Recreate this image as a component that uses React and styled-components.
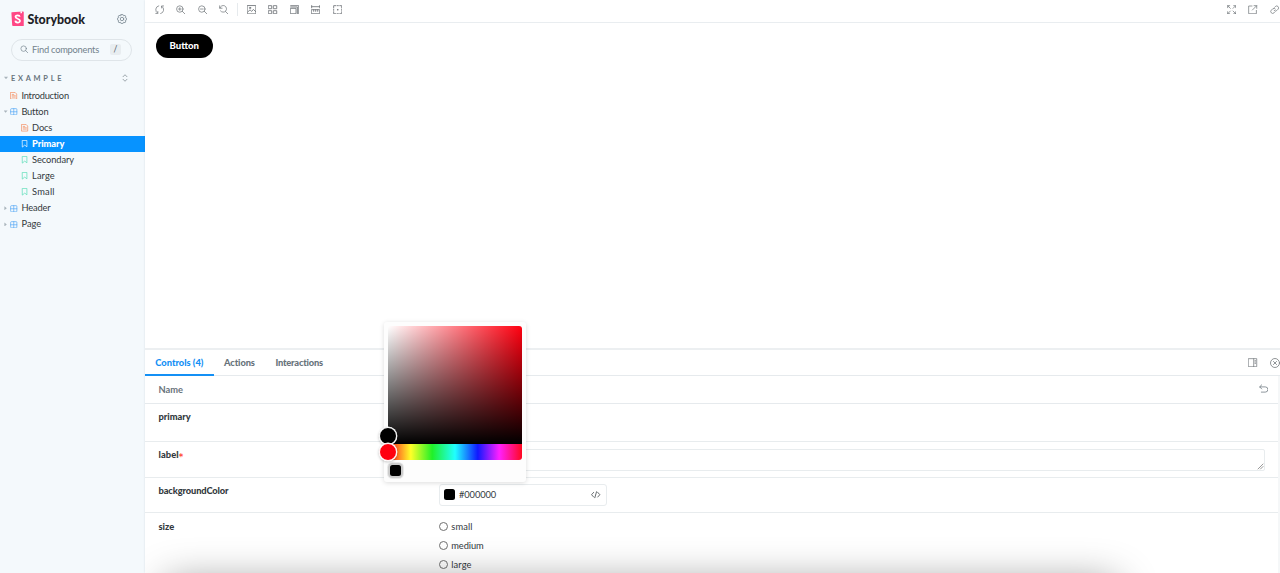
import React from 'react';
import styled, { createGlobalStyle, css } from 'styled-components';

const Global = createGlobalStyle`
  *, *::before, *::after { box-sizing: border-box; }
  html, body { margin: 0; height: 573px; overflow: hidden; background: #fff; }
  body, button, input { font-family: "Lato", "Noto Sans", sans-serif; font-size: 9.3px; color: #33393d; }
`;

const App = styled.div`
  display: flex;
  width: 1280px;
  height: 573px;
  overflow: hidden;
`;

/* icons */

const Svg = styled.svg.attrs({ viewBox: '0 0 14 14' })`
  display: block;
  flex: none;
  width: ${p => p.$size || 9.4}px;
  height: ${p => p.$size || 9.4}px;
  fill: none;
  stroke: currentColor;
  stroke-width: ${p => p.$weight || 1.1};
  stroke-linecap: round;
  stroke-linejoin: round;
`;

const paths = {
  cog: 'M5.8 .6h2.4l.4 1.5 1.1.5 1.4-.8 1.2 1.2-.8 1.4.5 1.1 1.5.4v2.3l-1.5.4-.5 1.1.8 1.4-1.2 1.2-1.4-.8-1.1.5-.4 1.5H5.8l-.4-1.5-1.1-.5-1.4.8-1.2-1.2.8-1.4-.5-1.1-1.5-.4V5.9l1.5-.4.5-1.1-.8-1.4L2.9 1.8l1.4.8 1.1-.5zM9.4 7a2.4 2.4 0 1 1-4.8 0 2.4 2.4 0 0 1 4.8 0z',
  search: 'M10.5 6a4.5 4.5 0 1 1-9 0 4.5 4.5 0 0 1 9 0zM9.3 9.3L13 13',
  sync: 'M5.6 1.2A6 6 0 0 0 3.8 12M1.2 12.6h3V9.6M8.4 12.8A6 6 0 0 0 10.2 2M12.8 1.4h-3v3',
  zoomIn: 'M10.5 6a4.8 4.8 0 1 1-9.6 0 4.8 4.8 0 0 1 9.6 0zM9.3 9.3L13.3 13.3M5.7 4v4M3.7 6h4',
  zoomOut: 'M10.5 6a4.8 4.8 0 1 1-9.6 0 4.8 4.8 0 0 1 9.6 0zM9.3 9.3L13.3 13.3M3.7 6h4',
  zoomReset: 'M1 1.2v3.6h3.6M1.3 4.6A5 5 0 1 1 2.2 8.8M9.6 9.6L13.3 13.3',
  photo: 'M.8 .8h12.4v12.4H.8zM1 10.5l3.5-3.3 2.5 2.3 2.5-3 3.5 3.5M5.5 4.3a1 1 0 1 1-2 0 1 1 0 0 1 2 0z',
  grid: 'M1 1h4.5v4.5H1zM8.5 1H13v4.5H8.5zM1 8.5h4.5V13H1zM8.5 8.5H13V13H8.5z',
  grow: 'M1 5h8v8H1zM1 3h10v10M1 1h12v12',
  ruler: 'M1 .8v3.5M13 .8v3.5M1 2.5h12M1 7h12v6H1zM4 7v2.5M7 7v2.5M10 7v2.5',
  outline: 'M1 4V1h3M6 1h2M10 1h3v3M13 6v2M13 10v3h-3M8 13H6M4 13H1v-3M1 8V6M7 6.5v1M6.5 7h1',
  expand: 'M1 4V1h3M1 1l4 4M10 1h3v3M13 1L9 5M1 10v3h3M1 13l4-4M13 10v3h-3M13 13L9 9',
  share: 'M6 1.5H1v11.5h11.5V8M9 1h4v4M13 1L6.5 7.5',
  link: 'M6 8a2.7 2.7 0 0 0 4 .3l2-2a2.8 2.8 0 0 0-4-4l-1.2 1.2M8 6a2.7 2.7 0 0 0-4-.3l-2 2a2.8 2.8 0 0 0 4 4l1.2-1.2',
  side: 'M1 1h12v12H1zM8.5 1v12M10.3 4h1M10.3 6h1M10.3 8h1',
  close: 'M13.3 7a6.3 6.3 0 1 1-12.6 0 6.3 6.3 0 0 1 12.6 0zM4.8 4.8l4.4 4.4M9.2 4.8L4.8 9.2',
  undo: 'M4 1.3L1 4.3 4 7.3M1.2 4.3H9.3a3.9 3.9 0 0 1 0 7.8H3.5',
  doc: 'M1.5 .8h8l3 3v9.4h-11zM4 4.5h3M4 7h6M4 9.5h6',
  component: 'M1.2 2.5q0-1.3 1.3-1.3h9q1.3 0 1.3 1.3v9q0 1.3-1.3 1.3h-9q-1.3 0-1.3-1.3zM7 1.2v11.6M1.2 7h11.6',
  bookmark: 'M3 .8h8v12L7 9.5l-4 3.3z',
  markup: 'M4 3.5L.8 7 4 10.5M10 3.5L13.2 7 10 10.5M8.3 2.5l-2.6 9',
  updown: 'M3.5 4.8L7 1.3l3.5 3.5M3.5 9.2L7 12.7l3.5-3.5',
};

const Icon = ({ name, size, weight }) => (
  <Svg $size={size} $weight={weight}><path d={paths[name]} /></Svg>
);

/* sidebar */

const Sidebar = styled.aside`
  width: 145px;
  flex: none;
  background: #f4f9fc;
`;

const Brand = styled.header`
  display: flex;
  align-items: center;
  height: 37px;
  padding: 0 18px 0 11px;
  color: #73828c;
`;

const Logo = styled.svg`
  width: 13px;
  height: 15.5px;
  margin-right: 3.5px;
`;

const BrandName = styled.span`
  flex: 1;
  padding-top: 1px;
  color: #1e2226;
  font: 900 12.4px "Lato", sans-serif;
  letter-spacing: -0.03px;
`;

const Search = styled.div`
  display: flex;
  align-items: center;
  width: 121px;
  height: 22px;
  margin: 1.5px 0 0 11px;
  padding: 0 10px 0 7.5px;
  border: 1px solid #dfe5e9;
  border-radius: 11px;
  color: #73828c;
`;

const SearchText = styled.span`
  flex: 1;
  margin-left: 4px;
  letter-spacing: -0.24px;
  line-height: 12px;
`;

const Key = styled.kbd`
  width: 11px;
  height: 11px;
  border-radius: 2px;
  background: #e8edf0;
  color: #4c5860;
  font: 8.5px/11px "Lato", sans-serif;
  text-align: center;
`;

const SectionHead = styled.div`
  display: flex;
  align-items: center;
  height: 16px;
  margin-top: 9.5px;
  padding: 0 16px 0 4px;
  color: #68747d;
  font-weight: 700;
  font-size: 7.4px;
`;

const SectionName = styled.span`
  flex: 1;
  margin-left: 3px;
  letter-spacing: 2.75px;
`;

const Caret = styled.i`
  width: 4px;
  height: 4px;
  flex: none;
  background: #a9b4bb;
  clip-path: ${p => (p.$open ? 'polygon(0 20%, 100% 20%, 50% 80%)' : 'polygon(20% 0, 80% 50%, 20% 100%)')};
  visibility: ${p => (p.$hidden ? 'hidden' : 'visible')};
`;

const Tree = styled.nav`
  padding-top: 1.5px;
`;

const kindColor = { doc: '#f58a5b', component: '#55a9f5', bookmark: '#55dcb4' };

const Node = styled.div`
  display: flex;
  align-items: center;
  gap: 3.5px;
  height: 16.12px;
  padding-left: ${p => (p.$nested ? 14.3 : 3.6)}px;
  line-height: 12px;
  letter-spacing: ${p => p.$track ?? -0.05}px;
  svg { color: ${p => kindColor[p.$kind]}; margin-left: -0.7px; }
  ${p => p.$selected && css`
    background: #0793ff;
    color: #fff;
    font-weight: 900;
    svg { color: #fff; }
  `}
`;

const nodes = [
  { label: 'Introduction', kind: 'doc', track: -0.24 },
  { label: 'Button', kind: 'component', caret: true, open: true, track: -0.2 },
  { label: 'Docs', kind: 'doc', nested: true, track: -0.2 },
  { label: 'Primary', kind: 'bookmark', nested: true, selected: true, track: -0.08 },
  { label: 'Secondary', kind: 'bookmark', nested: true, track: -0.1 },
  { label: 'Large', kind: 'bookmark', nested: true, track: 0.05 },
  { label: 'Small', kind: 'bookmark', nested: true, track: 0.2 },
  { label: 'Header', kind: 'component', caret: true, track: -0.15 },
  { label: 'Page', kind: 'component', caret: true, track: 0.05 },
];

/* canvas */

const Main = styled.main`
  position: relative;
  flex: 1;
  min-width: 0;
  overflow: hidden;
  background: #fff;
  box-shadow: 0 0 2px rgba(60, 80, 95, 0.15);
`;

const Toolbar = styled.div`
  display: flex;
  align-items: center;
  gap: 12.1px;
  height: 23px;
  padding: 0 1px 3px 9.6px;
  border-bottom: 1px solid #e9edf0;
  color: #73787c;
`;

const Divider = styled.i`
  width: 1px;
  height: 13px;
  margin: 0 -3px 0 -4px;
  background: #e6eaed;
`;

const Spacer = styled.span`
  flex: 1;
`;

const Preview = styled.section`
  height: 325px;
  padding: 11px;
`;

const StoryButton = styled.button`
  display: block;
  width: 56.5px;
  height: 24px;
  padding: 0 0 1px;
  border: 0;
  border-radius: 12px;
  background: #000;
  color: #fff;
  font-weight: 900;
  font-size: 9.6px;
  line-height: 22px;
`;

/* addon panel */

const Tabs = styled.div`
  display: flex;
  align-items: center;
  height: 28px;
  border-top: 2px solid #eceff1;
  border-bottom: 1px solid #e6eaed;
  color: #73787c;
  padding-right: 0.5px;
  gap: 12px;
`;

const TabList = styled.div`
  display: flex;
  flex: 1;
  height: 27px;
`;

const Tab = styled.div`
  height: 27px;
  padding: 0 10.3px;
  border-bottom: 2px solid ${p => (p.$active ? '#1490f5' : 'transparent')};
  color: ${p => (p.$active ? '#1490f5' : '#68737b')};
  font-weight: 900;
  line-height: 27px;
  letter-spacing: ${p => p.$track || 0}px;
`;

const Table = styled.div`
  border-right: 2px solid #f5f7f8;
`;

const Row = styled.div`
  display: grid;
  grid-template-columns: 280px 1fr;
  height: ${p => p.$height}px;
  padding: 0 13px 0 13.5px;
  border-bottom: 1px solid #e8ecee;
`;

const HeadRow = styled.div`
  display: flex;
  align-items: center;
  justify-content: space-between;
  height: 28px;
  padding: 0 10px 1px 13.5px;
  border-bottom: 1px solid #e6eaed;
  color: #68737b;
  font-weight: 700;
`;

const Name = styled.span`
  padding-top: ${p => p.$top || 6}px;
  font-weight: 900;
  line-height: 13px;
  letter-spacing: ${p => p.$track || 0}px;
`;

const Required = styled.span`
  color: #ff4b3a;
  font: 700 8.5px/8px "DejaVu Sans", sans-serif;
  vertical-align: -2px;
`;

const TextArea = styled.div`
  display: flex;
  align-items: flex-end;
  justify-content: flex-end;
  height: 22px;
  margin-top: 6.5px;
  border: 1px solid #e8ecee;
  border-radius: 2px;
  color: #777;
`;

const ColorField = styled.div`
  display: flex;
  align-items: center;
  gap: 4px;
  width: 168px;
  height: 22px;
  margin-top: 6px;
  padding: 0 5px 1px 4.5px;
  border: 1px solid #e8ecee;
  border-radius: 3px;
`;

const Chip = styled.i`
  width: 11px;
  height: 11px;
  border-radius: 2.5px;
  background: #000;
`;

const Value = styled.span`
  flex: 1;
  letter-spacing: -0.1px;
`;

const Options = styled.div`
  padding-top: 4px;
`;

const Option = styled.label`
  display: flex;
  align-items: center;
  gap: 3.8px;
  height: 18.9px;
  letter-spacing: ${p => p.$track ?? 0.1}px;
  &::before {
    content: '';
    width: 9px;
    height: 9px;
    border: 1px solid #707070;
    border-radius: 50%;
  }
`;

/* colour picker overlay */

const Picker = styled.div`
  position: absolute;
  left: 239px;
  top: 322px;
  width: 142px;
  height: 160px;
  padding: 4px;
  border-radius: 3px;
  background: #fdfdfd;
  box-shadow: 0 1px 5px rgba(0, 0, 0, 0.14);
`;

const Saturation = styled.div`
  height: 118px;
  border-radius: 3px 3px 0 0;
  background: linear-gradient(to top, #000, transparent), linear-gradient(to right, #fff, transparent), #ff0010;
`;

const Hue = styled.div`
  height: 16px;
  border-radius: 0 0 3px 3px;
  background: linear-gradient(to right, #ff1020 0%, #ffff28 17%, #20f028 33%, #20ffff 50%, #1018ff 67%, #ff20ff 83%, #ff0820 100%);
`;

const Thumb = styled.i`
  position: absolute;
  left: -5px;
  top: ${p => p.$top}px;
  width: 18px;
  height: 18px;
  border: 1.5px solid #fff;
  border-radius: 50%;
  background: ${p => p.$color};
  box-shadow: 0 0 0 0.4px #fff, 0 1px 3px rgba(0, 0, 0, 0.3);
`;

const Preset = styled.div`
  width: 11px;
  height: 11px;
  margin: 5px 0 0 1.7px;
  border-radius: 2.5px;
  background: #000;
  box-shadow: 0 0 0 2px #ccc, 0 0 0 3px #e9e9e9;
`;

const DockShadow = styled.div`
  position: absolute;
  left: 20px;
  right: 163px;
  top: 582px;
  height: 60px;
  border-radius: 8px;
  box-shadow: 0 0 40px 0 rgba(0, 0, 0, 0.42);
  pointer-events: none;
`;

export default function StorybookPage() {
  return (
    <App>
      <Global />
      <Sidebar>
        <Brand>
          <Logo viewBox="0 0 26 31">
            <path d="M1.5 2.5L24 .8q1.5 0 1.5 1.5v27q0 1.5-1.5 1.5L4 30q-1.5 0-1.6-1.5L.8 4Q.8 2.6 1.5 2.5z" fill="#ff4785" />
            <path d="M19 .9l3-.3v4.500L20.500 4 19 5z" fill="#fff" />
            <path d="M17.5 11.5C17 8 9 7.5 9 11.5c0 4.5 9 3.3 9 8.2 0 4.6-9 4.8-9.2-.4" fill="none" stroke="#fff" strokeWidth="3.5" />
          </Logo>
          <BrandName>Storybook</BrandName>
          <Icon name="cog" size={10} />
        </Brand>
        <Search>
          <Icon name="search" size={8.5} />
          <SearchText>Find components</SearchText>
          <Key>/</Key>
        </Search>
        <SectionHead>
          <Caret $open />
          <SectionName>EXAMPLE</SectionName>
          <Icon name="updown" size={8} />
        </SectionHead>
        <Tree>
          {nodes.map(n => (
            <Node key={n.label} $kind={n.kind} $nested={n.nested} $selected={n.selected} $track={n.track}>
              <Caret $open={n.open} $hidden={!n.caret} />
              <Icon name={n.kind} size={7.5} weight={1.3} />
              {n.label}
            </Node>
          ))}
        </Tree>
      </Sidebar>
      <Main>
        <Toolbar>
          <Icon name="sync" />
          <Icon name="zoomIn" />
          <Icon name="zoomOut" />
          <Icon name="zoomReset" />
          <Divider />
          <Icon name="photo" weight={1.3} />
          <Icon name="grid" weight={1.3} />
          <Icon name="grow" weight={1.3} />
          <Icon name="ruler" weight={1.3} />
          <Icon name="outline" weight={1.3} />
          <Spacer />
          <Icon name="expand" />
          <Icon name="share" />
          <Icon name="link" />
        </Toolbar>
        <Preview>
          <StoryButton>Button</StoryButton>
        </Preview>
        <Tabs>
          <TabList>
            <Tab $active>Controls (4)</Tab>
            <Tab $track={-0.1}>Actions</Tab>
            <Tab $track={-0.2}>Interactions</Tab>
          </TabList>
          <Icon name="side" />
          <Icon name="close" size={10} />
        </Tabs>
        <Table>
          <HeadRow>
            Name
            <Icon name="undo" />
          </HeadRow>
          <Row $height={38}><Name>primary</Name></Row>
          <Row $height={36}>
            <Name $track={0.1}>label<Required>*</Required></Name>
            <TextArea><Svg $size={7} $weight={1.5}><path d="M2 12L12 2M7 12l5-5" /></Svg></TextArea>
          </Row>
          <Row $height={35}>
            <Name $track={-0.12}>backgroundColor</Name>
            <ColorField>
              <Chip />
              <Value>#000000</Value>
              <Icon name="markup" />
            </ColorField>
          </Row>
          <Row $height={80}>
            <Name $top={7}>size</Name>
            <Options>
              <Option>small</Option>
              <Option $track={-0.1}>medium</Option>
              <Option>large</Option>
            </Options>
          </Row>
        </Table>
        <Picker>
          <Saturation />
          <Hue />
          <Preset />
          <Thumb $top={105} $color="#000" />
          <Thumb $top={121} $color="#ff0010" />
        </Picker>
        <DockShadow />
      </Main>
    </App>
  );
}
